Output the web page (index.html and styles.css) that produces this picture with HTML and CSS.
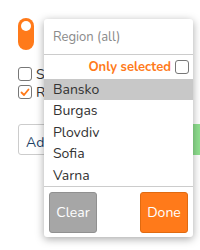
FILE: index.html
```html
<!DOCTYPE html>
<html>
<head>
<meta charset="utf-8">
<link rel="stylesheet" href="styles.css">
</head>
<body>
<div class="page">
  <div class="toggle"><span class="knob"></span></div>
  <div class="checks">
    <label class="chk"><span class="box"></span><span class="lbl">Sofia</span></label>
    <label class="chk"><span class="box checked"><svg width="10" height="9" viewBox="0 0 10 9"><path d="M1.5 4.5 L4 7 L8.5 1.5" fill="none" stroke="#ff7a1a" stroke-width="1.8" stroke-linecap="round" stroke-linejoin="round"/></svg></span><span class="lbl">Region</span></label>
  </div>
  <div class="actions">
    <div class="addbtn">Add filter</div>
    <div class="greenbtn">Details</div>
  </div>
</div>
<div class="popup">
  <div class="search">Region (all)</div>
  <div class="only"><span class="only-txt">Only selected</span><span class="box"></span></div>
  <ul class="list">
    <li class="item active">Bansko</li>
    <li class="item">Burgas</li>
    <li class="item">Plovdiv</li>
    <li class="item">Sofia</li>
    <li class="item">Varna</li>
  </ul>
  <div class="footer">
    <button class="btn clear">Clear</button>
    <button class="btn done">Done</button>
  </div>
</div>
</body>
</html>
```
FILE: styles.css
```css
html, body { margin: 0; padding: 0; background: #fff; }
body {
  width: 200px; height: 250px; overflow: hidden; position: relative;
  font-family: "Nunito", "Lato", "Open Sans", sans-serif;
  color: #333;
}
.page { padding: 18px 0 0 18px; display: flex; flex-direction: column; }
.toggle {
  width: 16px; height: 32px; border-radius: 8px; background: #ff7a1a;
  position: relative;
}
.knob {
  position: absolute; left: 3px; top: 3px; width: 10px; height: 10px;
  border-radius: 50%; background: #fff;
}
.checks { margin-top: 17px; display: flex; flex-direction: column; gap: 4px; }
.chk { display: flex; align-items: center; gap: 4px; height: 14px; font-size: 14px; color: #333; }
.box {
  width: 12px; height: 12px; border: 1px solid #777; border-radius: 3px;
  background: #fff; display: inline-flex; align-items: center; justify-content: center;
  box-sizing: content-box;
}
.actions { margin-top: 25px; display: flex; gap: 10px; }
.addbtn {
  width: 120px; height: 31px; border: 1px solid #ccc; border-radius: 3px;
  font-size: 14px; color: #1d3f66; display: flex; align-items: flex-end; padding: 0 0 2px 7px;
  box-sizing: border-box;
}
.greenbtn {
  width: 60px; height: 31px; background: #8fe08f; font-size: 14px; color: #1d3f66;
  display: flex; align-items: flex-end; padding-bottom: 2px; box-sizing: border-box;
}
.popup {
  position: absolute; left: 44px; top: 19px; width: 149px; height: 218px;
  background: #fff; border-radius: 3px;
  box-shadow: 0 2px 8px rgba(0,0,0,0.35);
  display: flex; flex-direction: column;
}
.search {
  height: 36px; border-bottom: 1px solid #ccc; font-size: 13px; color: #8a8a8a;
  display: flex; align-items: center; padding-left: 9px; box-sizing: border-box;
  padding-top: 1px;
}
.only {
  height: 24px; display: flex; align-items: center; justify-content: flex-end;
  gap: 4px; padding-right: 4px; font-size: 13px;
}
.only-txt { color: #ff7a1a; font-weight: bold; }
.list { list-style: none; margin: 0; padding: 0; border-bottom: 1px solid #ccc; }
.item { height: 21.4px; line-height: 22px; font-size: 14px; padding-left: 9px; color: #333; }
.item.active { background: #c8c8c8; }
.footer { display: flex; justify-content: space-between; padding: 5px 5px 0 5px; }
.btn {
  width: 48px; height: 41px; border-radius: 3px; font-family: inherit;
  font-size: 14px; color: #fff; padding: 0;
}
.clear { background: #a6a6a6; border: 1px solid #909090; }
.done { background: #ff7a1a; border: 1px solid #e06a10; }
```
